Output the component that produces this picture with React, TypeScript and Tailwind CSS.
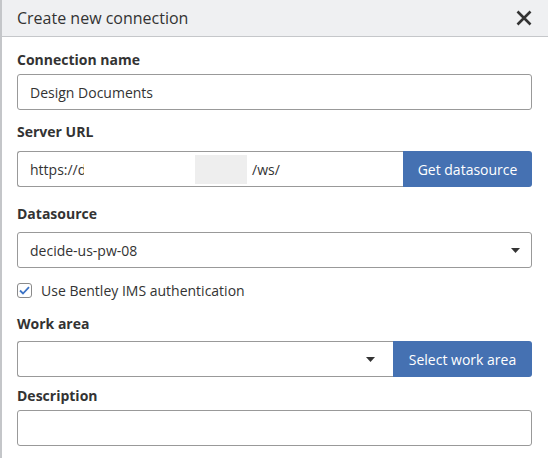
import React from "react";

function Caret() {
  return (
    <svg width="9" height="5" viewBox="0 0 9 5" className="shrink-0">
      <path d="M0 0 H9 L4.5 5 Z" fill="#333" />
    </svg>
  );
}

function Label({ children, className = "" }: { children: React.ReactNode; className?: string }) {
  return (
    <div className={"text-[14px] leading-[20px] font-bold text-[#333] " + className}>{children}</div>
  );
}

export default function App() {
  return (
    <div
      className="w-[548px] h-[458px] bg-white border-l-2 border-[#c4c6c9] overflow-hidden text-[#333]"
      style={{ fontFamily: '"Open Sans", "Noto Sans", sans-serif' }}
    >
      <div className="h-[37px] bg-[#eff0f2] border-b border-[#c5c7ca] flex items-center justify-between pl-[15px] pr-[16px]">
        <span className="text-[16px] text-[#333]">Create new connection</span>
        <svg width="16" height="16" viewBox="0 0 16 16">
          <path d="M1.5 1.5 L14.5 14.5 M14.5 1.5 L1.5 14.5" stroke="#333" strokeWidth="2.6" strokeLinecap="butt" />
        </svg>
      </div>

      <div className="pl-[15px] pr-[16px]">
        <Label className="mt-[13px]">Connection name</Label>
        <div className="mt-[4px] h-[36px] border border-[#999] rounded-[3px] flex items-center px-[12px] text-[14px]">
          Design Documents
        </div>

        <Label className="mt-[12px]">Server URL</Label>
        <div className="mt-[9px] h-[36px] flex">
          <div className="flex-1 border border-[#999] border-r-0 rounded-l-[3px] flex items-center pl-[12px] text-[14px] relative">
            <span className="w-[54px] overflow-hidden whitespace-nowrap">https://d</span>
            <span className="w-[111px]" />
            <span className="w-[52px] h-[29px] bg-[#eeeeee]" />
            <span className="ml-[5px]">/ws/</span>
          </div>
          <button className="w-[129px] h-full bg-[#4571b2] text-white text-[14px] rounded-r-[3px] flex items-center justify-center">
            Get datasource
          </button>
        </div>

        <Label className="mt-[17px]">Datasource</Label>
        <div className="mt-[8px] h-[36px] border border-[#999] rounded-[3px] flex items-center justify-between pl-[12px] pr-[11px] text-[14px]">
          <span>decide-us-pw-08</span>
          <Caret />
        </div>

        <div className="mt-[13px] flex items-center h-[18px]">
          <div className="w-[15px] h-[15px] border border-[#8a8a8a] rounded-[3px] flex items-center justify-center bg-white">
            <svg width="11" height="9" viewBox="0 0 11 9">
              <path d="M1 4.5 L4 7.5 L10 1.2" fill="none" stroke="#3d74c6" strokeWidth="1.8" />
            </svg>
          </div>
          <span className="ml-[9px] text-[14px]">Use Bentley IMS authentication</span>
        </div>

        <Label className="mt-[15px]">Work area</Label>
        <div className="mt-[7px] h-[36px] flex">
          <div className="flex-1 border border-[#999] border-r-0 rounded-l-[3px] flex items-center justify-end pr-[18px]">
            <Caret />
          </div>
          <button className="w-[139px] h-full bg-[#4571b2] text-white text-[14px] rounded-r-[3px] flex items-center justify-center">
            Select work area
          </button>
        </div>

        <Label className="mt-[9px]">Description</Label>
        <div className="mt-[4px] h-[36px] border border-[#999] rounded-[3px]" />
      </div>
    </div>
  );
}
